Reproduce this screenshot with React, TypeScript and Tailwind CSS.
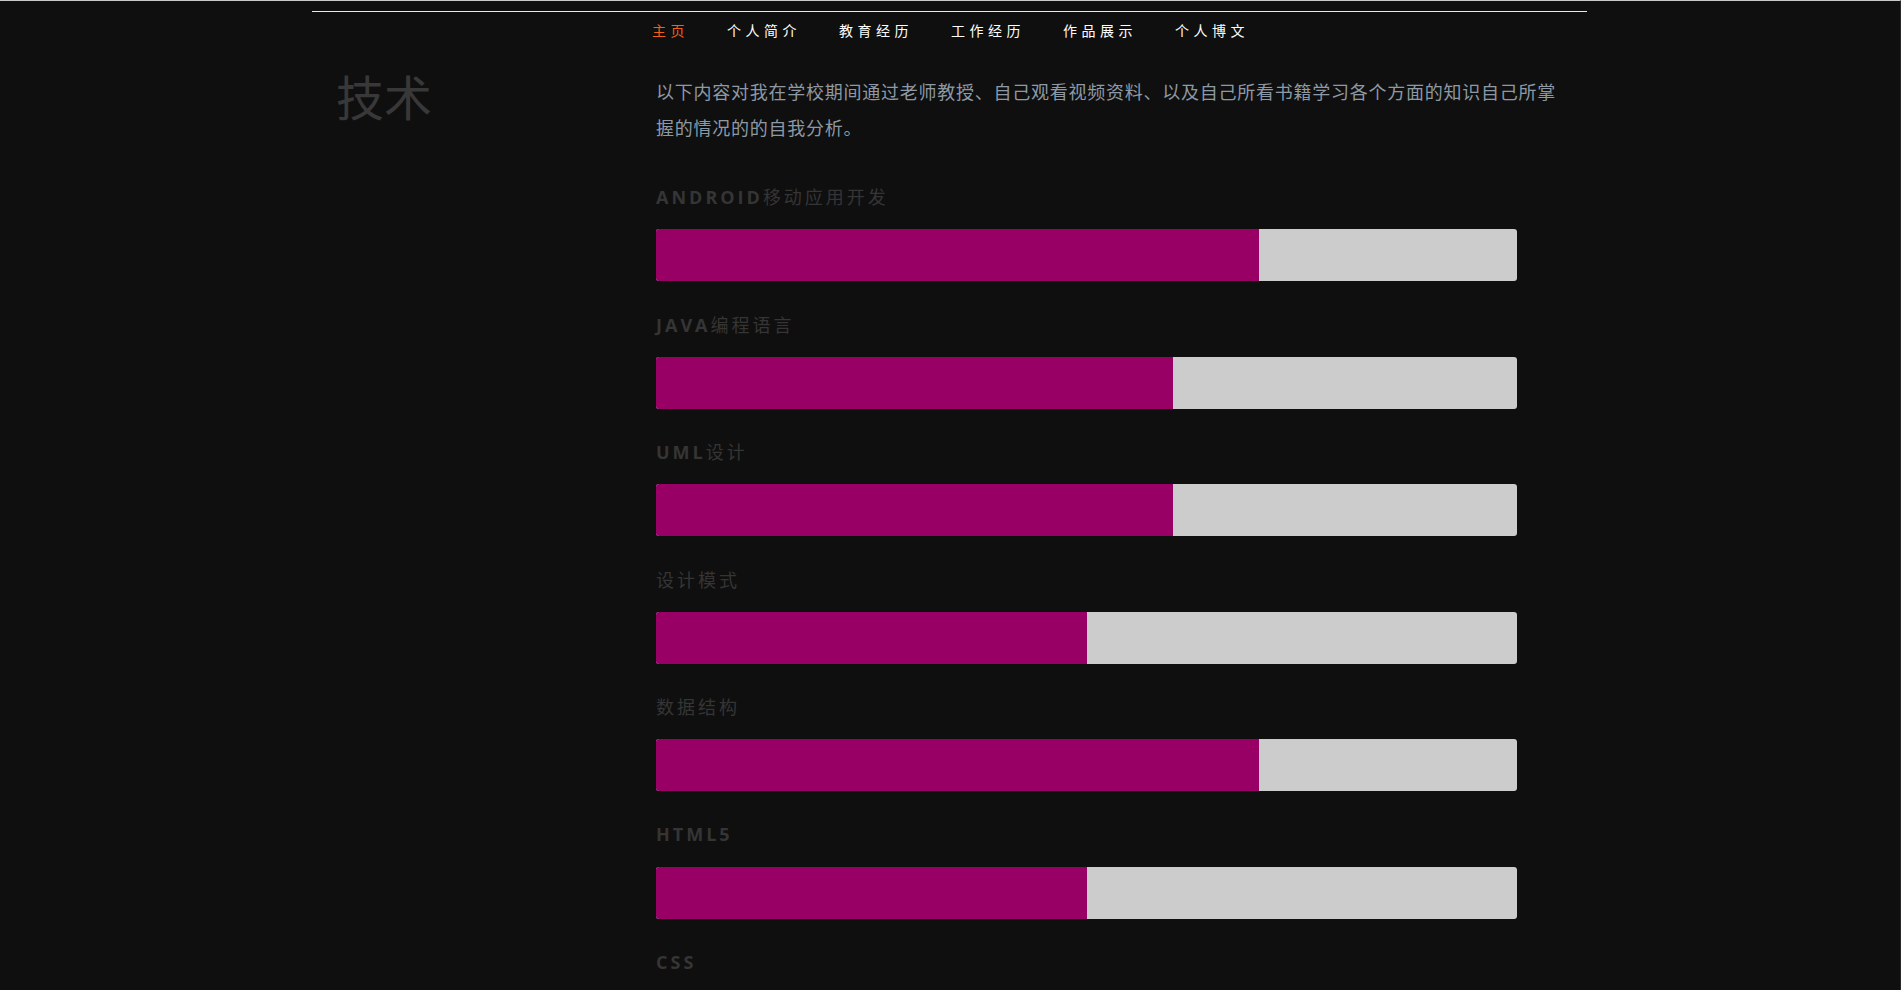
import React from "react";

const navItems = ["主页", "个人简介", "教育经历", "工作经历", "作品展示", "个人博文"];

const skills: { latin: string; cjk: string; pct: number }[] = [
  { latin: "ANDROID", cjk: "移动应用开发", pct: 70 },
  { latin: "JAVA", cjk: "编程语言", pct: 60 },
  { latin: "UML", cjk: "设计", pct: 60 },
  { latin: "", cjk: "设计模式", pct: 50 },
  { latin: "", cjk: "数据结构", pct: 70 },
  { latin: "HTML5", cjk: "", pct: 50 },
  { latin: "CSS", cjk: "", pct: 50 },
];

export default function App() {
  return (
    <div
      className="min-h-[990px] h-[990px] overflow-hidden bg-[#0f0f0f] border-t border-[#c8c8c8] border-r border-r-[#2a2a2a]"
      style={{ fontFamily: '"Noto Sans CJK SC", "Noto Sans", sans-serif' }}
    >
      <div className="w-[1275px] ml-[312px]">
        {/* header */}
        <div className="mt-[10px] border-t border-[#e8e8e8]" />
        <nav className="h-[36px] flex items-center justify-center gap-[38px] pl-[2px]">
          {navItems.map((n, i) => (
            <span
              key={n}
              className={
                "text-[14px] leading-none tracking-[4.5px] " +
                (i === 0 ? "text-[#f2601a]" : "text-white")
              }
            >
              {n}
            </span>
          ))}
        </nav>

        {/* main */}
        <div className="flex">
          <div className="w-[344px] pl-[24px] pt-[19px]">
            <h1 className="text-[48px] leading-[56px] text-[#383838] font-normal">技术</h1>
          </div>
          <div className="flex-1">
            <p className="w-[910px] mt-[25px] text-[18px] leading-[36px] tracking-[0.75px] text-[#8d99a5]">
              以下内容对我在学校期间通过老师教授、自己观看视频资料、以及自己所看书籍学习各个方面的知识自己所掌握的情况的的自我分析。
            </p>
            <div className="mt-[38px] flex flex-col gap-[29.6px]">
              {skills.map((s, i) => (
                <div key={i} className="flex flex-col">
                  <div
                    className="h-[27px] leading-[27px] text-[18px] tracking-[3px] text-[#353535]"
                    style={{ fontFamily: '"Open Sans", "Noto Sans CJK SC", sans-serif' }}
                  >
                    {s.latin && <span className="font-bold">{s.latin}</span>}
                    {s.cjk && (
                      <span
                        className="font-normal"
                        style={{ fontFamily: '"Noto Sans CJK SC", sans-serif' }}
                      >
                        {s.cjk}
                      </span>
                    )}
                  </div>
                  <div className="mt-[19px] w-[861px] h-[52px] bg-[#cccccc] rounded-[3px] flex overflow-hidden">
                    <div className="h-full bg-[#990066]" style={{ width: `${s.pct}%` }} />
                  </div>
                </div>
              ))}
            </div>
          </div>
        </div>
      </div>
    </div>
  );
}
